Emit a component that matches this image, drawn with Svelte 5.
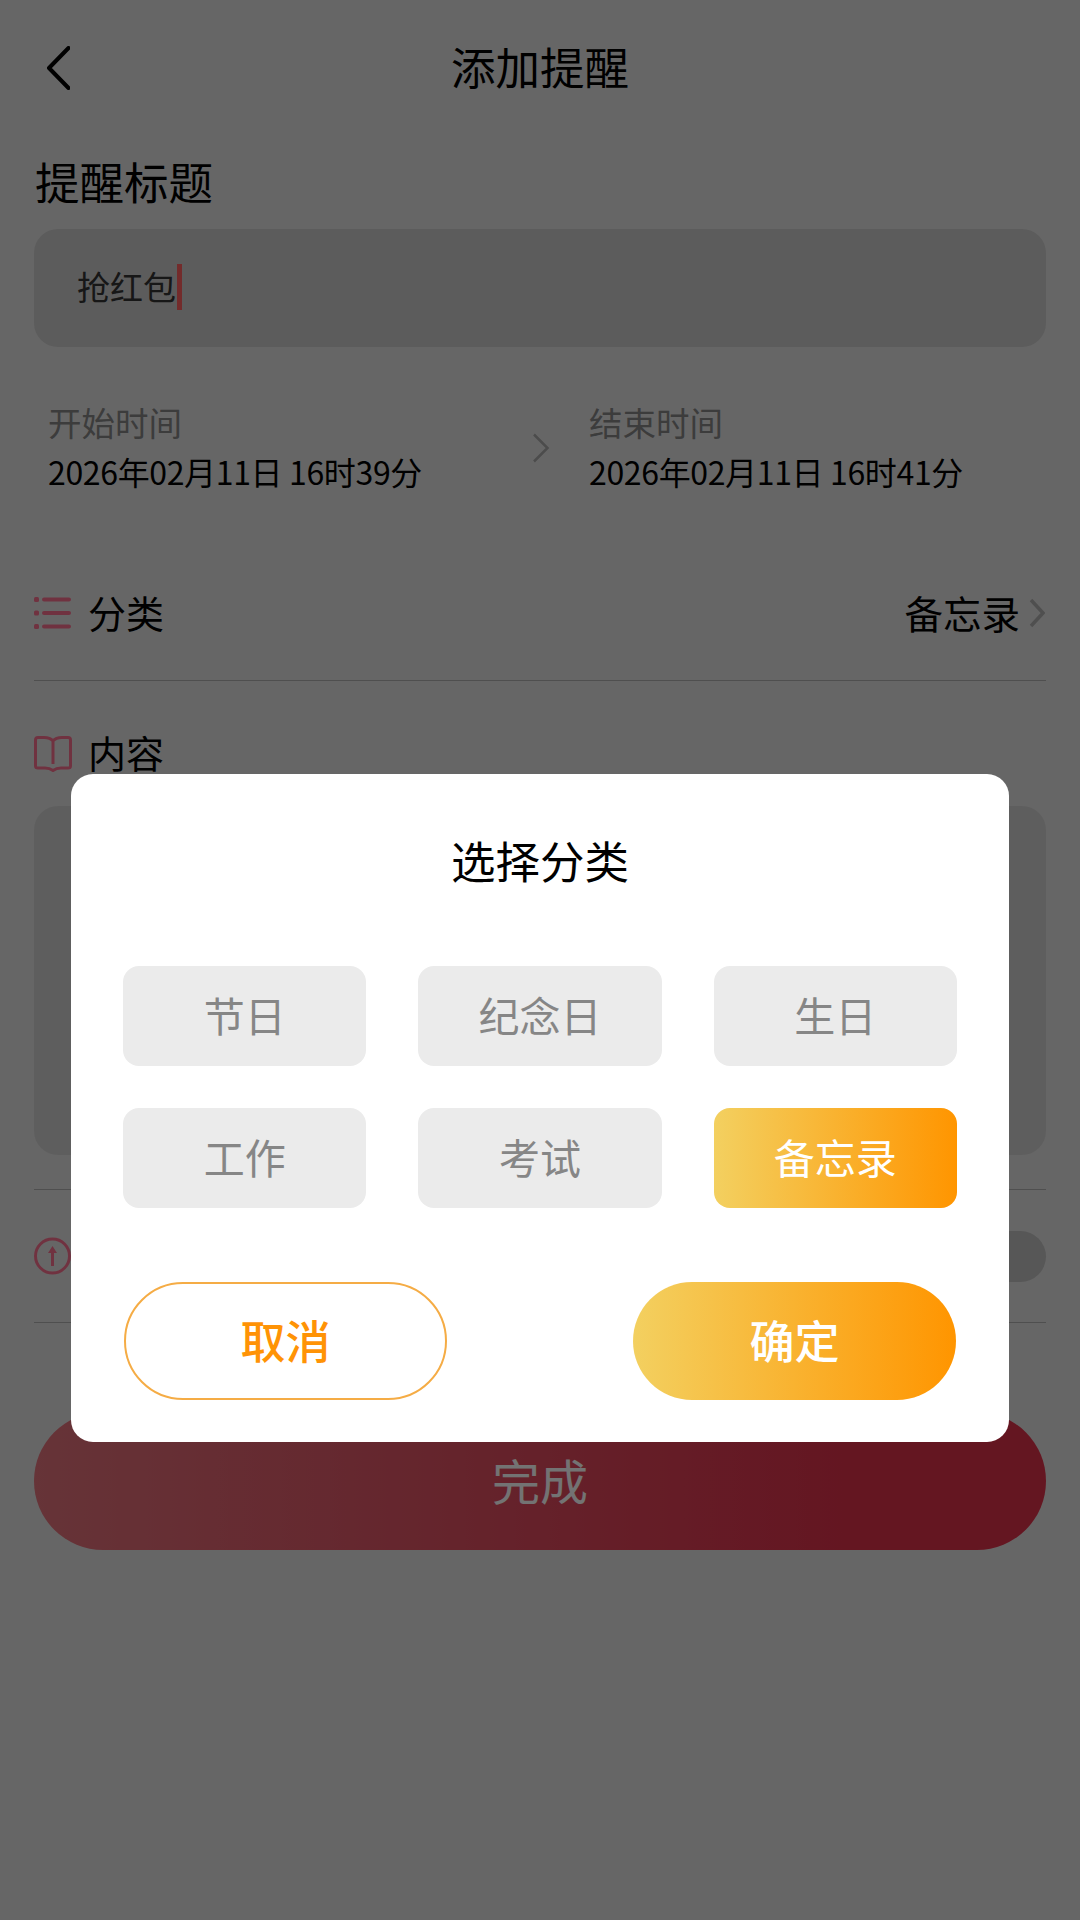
<script>
    const categories = ["节日", "纪念日", "生日", "工作", "考试", "备忘录"]
    let selected = "备忘录"
    let title = "抢红包"
</script>

<div class="page">
    <header class="nav">
        <svg class="back" width="24" height="44" viewBox="0 0 24 44">
            <path d="M22.500 2 L3 22 L22.500 42" fill="none" stroke="#000" stroke-width="4" stroke-linecap="round" stroke-linejoin="round"/>
        </svg>
        <h1>添加提醒</h1>
    </header>

    <div class="field-title">提醒标题</div>
    <div class="input"><span>{title}</span><i class="caret"></i></div>

    <div class="times">
        <div class="time">
            <div class="time-label">开始时间</div>
            <div class="time-value">2026年02月11日 16时39分</div>
        </div>
        <svg class="time-arrow" width="18" height="30" viewBox="0 0 18 30">
            <path d="M2 1.500 L15.500 15 L2 28.500" fill="none" stroke="#a8a8a8" stroke-width="2.500"/>
        </svg>
        <div class="time">
            <div class="time-label">结束时间</div>
            <div class="time-value">2026年02月11日 16时41分</div>
        </div>
    </div>

    <div class="row category">
        <svg class="icon" width="38" height="34" viewBox="0 0 38 34">
            <g fill="#f8708f">
                <rect x="0" y="1" width="5" height="5" rx="1.500"/>
                <rect x="8" y="1.500" width="29" height="4" rx="2"/>
                <rect x="0" y="14.500" width="5" height="5" rx="1.500"/>
                <rect x="8" y="15" width="29" height="4" rx="2"/>
                <rect x="0" y="28" width="5" height="5" rx="1.500"/>
                <rect x="8" y="28.500" width="29" height="4" rx="2"/>
            </g>
        </svg>
        <span class="row-name">分类</span>
        <span class="row-value">备忘录</span>
        <svg class="row-arrow" width="16" height="30" viewBox="0 0 16 30">
            <path d="M2 2 L14 15 L2 28" fill="none" stroke="#b0b0b0" stroke-width="3.500"/>
        </svg>
    </div>

    <div class="content-head">
        <svg class="icon" width="38" height="36" viewBox="0 0 38 36">
            <path d="M19 5 C17 2.500 14 1.500 10 1.500 H4 C2.500 1.500 1.500 2.500 1.500 4 V30 C1.500 31.500 2.500 32 4 32 H11 C14 32 17 33 19 34.500 C21 33 24 32 27 32 H34 C35.500 32 36.500 31.500 36.500 30 V4 C36.500 2.500 35.500 1.500 34 1.500 H28 C24 1.500 21 2.500 19 5 Z M19 5 V28" fill="none" stroke="#f8708f" stroke-width="3"/>
        </svg>
        <span class="row-name">内容</span>
    </div>
    <div class="textarea"></div>

    <div class="row pin">
        <svg class="icon" width="38" height="38" viewBox="0 0 38 38">
            <circle cx="18.500" cy="19" r="17" fill="none" stroke="#f8708f" stroke-width="3"/>
            <path d="M18.500 29 V14" stroke="#f8708f" stroke-width="3"/>
            <path d="M18.500 9 L23 16 H14 Z" fill="#f8708f"/>
        </svg>
        <span class="row-name">置顶</span>
        <div class="toggle"></div>
    </div>

    <button class="finish">完成</button>
</div>

<div class="mask">
    <div class="dialog">
        <div class="dialog-title">选择分类</div>
        <div class="chips">
            {#each categories as c}
                <div class={c === selected ? "chip on" : "chip"}>{c}</div>
            {/each}
        </div>
        <div class="actions">
            <button class="cancel">取消</button>
            <button class="ok">确定</button>
        </div>
    </div>
</div>

<style>
    :global(body) {
        background: #e3e3e3;
        font-family: "Noto Sans CJK SC", "Liberation Sans", sans-serif;
        color: #000;
    }

    .page {
        height: 1920px;
        box-sizing: border-box;
        padding: 0 34px;
        overflow: hidden;
    }

    .nav {
        position: relative;
        height: 136px;
        box-sizing: border-box;
        padding-bottom: 5px;
        display: flex;
        align-items: center;
        justify-content: center;
    }

    .back {
        position: absolute;
        left: 12px;
        top: 46px;
    }

    h1 {
        margin: 0;
        font-size: 44.500px;
        font-weight: 400;
    }

    .field-title {
        margin-top: 20px;
        padding-left: 1px;
        height: 50px;
        line-height: 50px;
        font-size: 44.500px;
    }

    .input {
        margin-top: 23px;
        height: 118px;
        box-sizing: border-box;
        padding: 0 0 0 43px;
        background: #ccc;
        border-radius: 24px;
        display: flex;
        align-items: center;
        font-size: 33px;
        color: #333;
    }

    .input span {
        margin-bottom: 5px;
    }

    .caret {
        display: block;
        width: 5px;
        height: 46px;
        margin-left: 1px;
        margin-bottom: 2px;
        background: #ff6060;
    }

    .times {
        margin-top: 50px;
        padding-left: 14px;
        height: 101px;
        display: flex;
    }

    .time {
        width: 484px;
    }

    .time + .time-arrow + .time {
        width: auto;
    }

    .time-label {
        height: 49px;
        line-height: 49px;
        font-size: 33.500px;
        color: #858585;
    }

    .time-value {
        height: 51px;
        line-height: 51px;
        font-size: 32px;
        letter-spacing: -0.35px;
        white-space: nowrap;
    }

    .time-arrow {
        margin: 36px 39px 0 0;
        flex-shrink: 0;
    }

    .row {
        display: flex;
        align-items: center;
        border-bottom: 1px solid #afafaf;
    }

    .category {
        margin-top: 48px;
        height: 134px;
    }

    .icon {
        flex-shrink: 0;
        margin-right: 16px;
    }

    .row-name {
        font-size: 38px;
        flex: 1;
        margin-bottom: 3px;
    }

    .row-value {
        font-size: 38.500px;
        margin-bottom: 3px;
    }

    .row-arrow {
        margin: 0 1px 0 9px;
    }

    .content-head {
        margin-top: 50px;
        height: 46px;
        display: flex;
        align-items: center;
    }

    .content-head .row-name {
        margin-bottom: 5px;
    }

    .textarea {
        margin-top: 29px;
        height: 349px;
        background: #d1d1d1;
        border-radius: 24px;
    }

    .pin {
        margin-top: 34px;
        height: 132px;
        border-top: 1px solid #afafaf;
    }

    .toggle {
        width: 110px;
        height: 51px;
        border-radius: 26px;
        background: #c1c1c1;
    }

    button {
        border: none;
        padding: 0 0 4px;
        font-family: inherit;
        cursor: pointer;
    }

    .finish {
        display: block;
        width: 100%;
        height: 138px;
        margin-top: 89px;
        border-radius: 69px;
        background: linear-gradient(to right, #e3737c, #de314b 80%);
        color: #fff;
        font-size: 48px;
    }

    .mask {
        position: fixed;
        inset: 0;
        background: rgba(0, 0, 0, 0.55);
        display: flex;
        flex-direction: column;
        align-items: center;
        padding-top: 774px;
        box-sizing: border-box;
    }

    .dialog {
        width: 938px;
        height: 668px;
        box-sizing: border-box;
        padding: 61px 52px 0;
        background: #fff;
        border-radius: 22px;
    }

    .dialog-title {
        height: 50px;
        line-height: 50px;
        text-align: center;
        font-size: 44.500px;
    }

    .chips {
        margin-top: 81px;
        display: grid;
        grid-template-columns: repeat(3, 1fr);
        gap: 42px 52px;
    }

    .chip {
        height: 100px;
        line-height: 96px;
        text-align: center;
        border-radius: 16px;
        background: #ebebeb;
        color: #868686;
        font-size: 41px;
    }

    .chip.on {
        background: linear-gradient(to right, #f3d060, #ff9500);
        color: #fff;
    }

    .actions {
        margin-top: 74px;
        padding: 0 1px;
        display: flex;
        justify-content: space-between;
    }

    .actions button {
        width: 323px;
        height: 118px;
        border-radius: 59px;
        font-size: 45px;
        font-weight: 500;
    }

    .cancel {
        background: #fff;
        border: 2px solid #f5ac45;
        color: #ff9305;
    }

    .ok {
        background: linear-gradient(to right, #f3d060, #ff9500);
        color: #fff;
    }
</style>
